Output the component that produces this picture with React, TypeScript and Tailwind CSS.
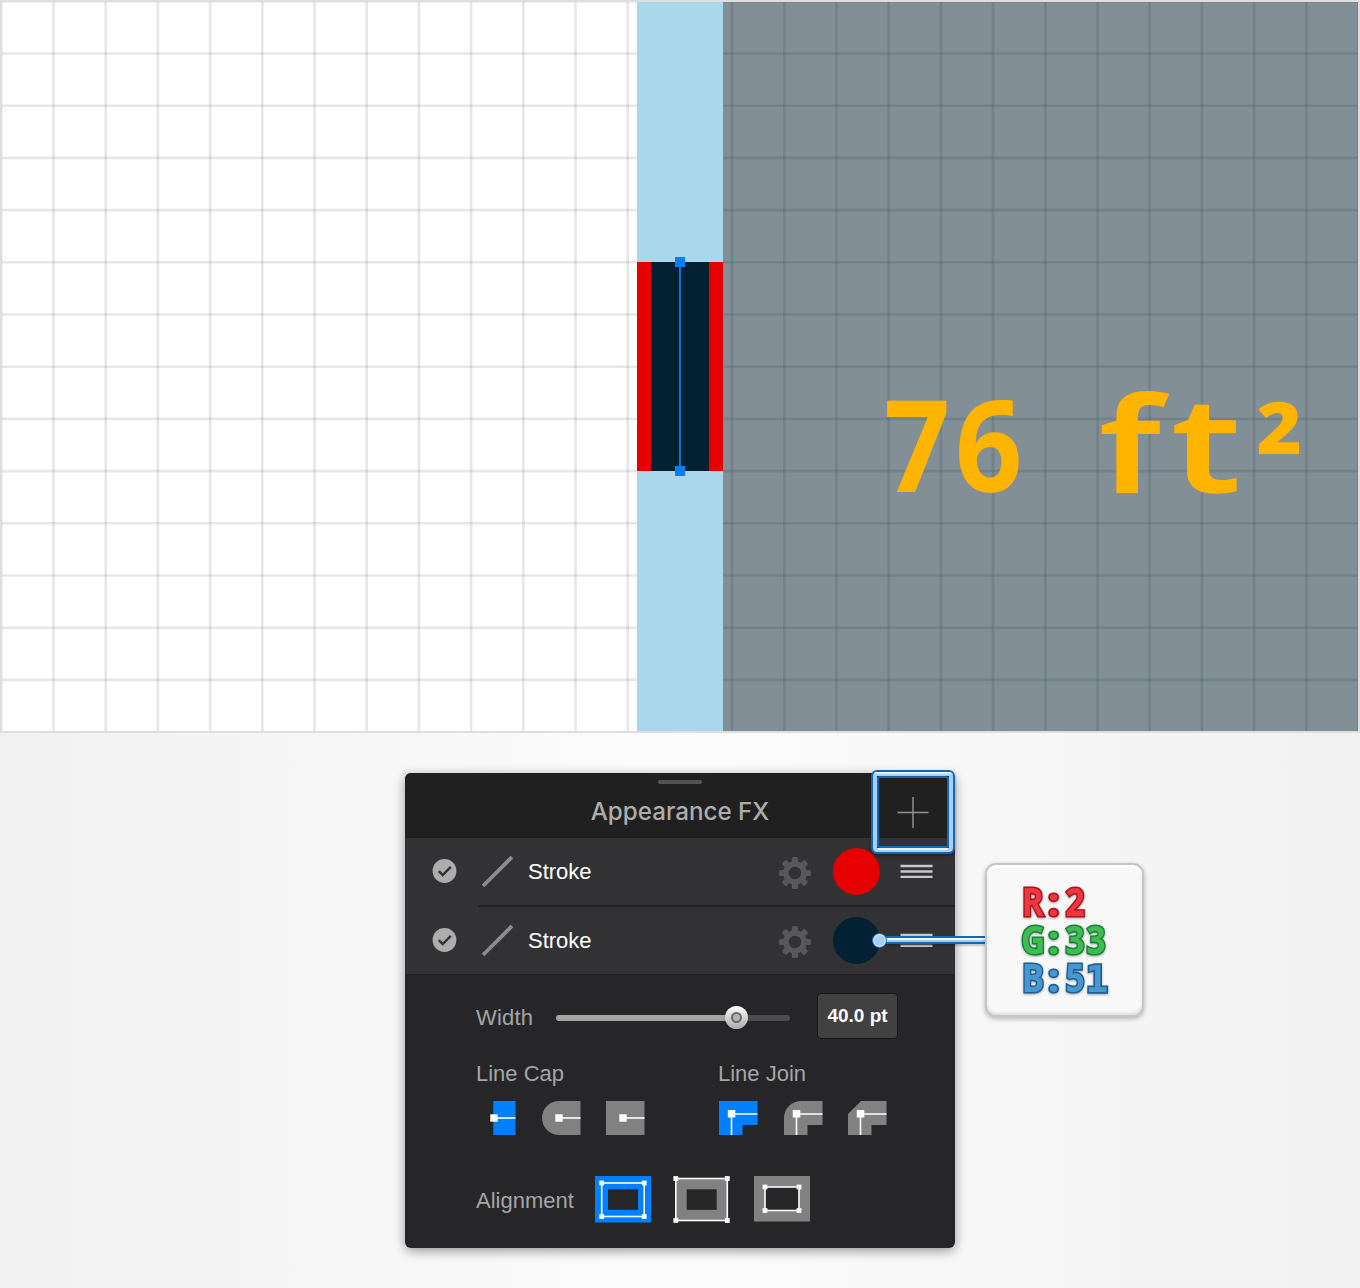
import React from "react";

const PITCH = 52.2;

function Grid({ color }: { color: string }) {
  const columns = Array.from({ length: 27 }, (_, i) => `M${1.3 + i * PITCH} 0V733`).join("");
  const rows = Array.from({ length: 14 }, (_, i) => `M0 ${1.3 + i * PITCH}H1360`).join("");
  return (
    <svg width="1360" height="733" viewBox="0 0 1360 733" fill="none" stroke={color} strokeWidth="2.6">
      <path d={columns} />
      <path d={rows} />
    </svg>
  );
}

function Canvas() {
  return (
    <section className="relative h-[733px] overflow-hidden border-2 border-[#dedede] bg-white">
      <div className="absolute -top-[2px] -left-[2px]">
        <Grid color="#80808030" />
      </div>
      <div className="absolute top-0 bottom-0 left-[721px] right-0 overflow-hidden bg-[#828f97]">
        <div className="absolute -top-[2px] -left-[723px] w-[1360px]">
          <Grid color="#5060684a" />
        </div>
      </div>
      <div className="absolute inset-y-0 left-[634.7px] w-[86.8px] bg-[#a9d8ec]" />
      <div className="absolute top-[260px] left-[634.7px] flex h-[209px] w-[86.8px] justify-center bg-[#e60000]">
        <div className="w-[58px] bg-[#022133]" />
      </div>
      <div className="absolute top-[255px] left-[673px] flex h-[219px] w-[10px] flex-col items-center justify-between">
        <span className="size-[10px] bg-[#007fff]" />
        <span className="w-[2px] grow bg-[#1470cc]" />
        <span className="size-[10px] bg-[#007fff]" />
      </div>
      <div className="absolute top-[361px] left-[881px] flex h-[160px] whitespace-pre font-['Open_Sans'] text-[127px] leading-[160px] font-bold text-[#ffb400]">
        <span className="w-[72px]"><span className="inline-block origin-left translate-x-px scale-x-[0.91]">7</span></span>
        <span className="w-[138px]"><span className="inline-block origin-left scale-x-[0.93]">6 </span></span>
        <span className="w-[76px] font-semibold"><span className="inline-block origin-[0_128px] translate-x-[7px] scale-x-[1.31] scale-y-[1.03] [-webkit-text-stroke:1.8px_#ffb400]">f</span></span>
        <span className="w-[84px] font-semibold"><span className="inline-block origin-[0_128px] translate-x-[3px] scale-x-[1.36] scale-y-[1.03] [-webkit-text-stroke:1.6px_#ffb400]">t</span></span>
        <span className="inline-block origin-[0_88px] translate-x-[2.5px] translate-y-[14px] scale-y-[0.94]">²</span>
      </div>
    </section>
  );
}

function Gear() {
  return (
    <svg width="34" height="34" viewBox="-17 -17 34 34" fill="#58585b">
      {[0, 45, 90, 135].map((a) => (
        <rect key={a} x="-3.1" y="-16" width="6.2" height="32" rx="1.6" transform={`rotate(${a})`} />
      ))}
      <circle r="11.8" />
      <circle r="6.2" fill="#323235" />
    </svg>
  );
}

function StrokeRow({ swatch, last = false }: { swatch: string; last?: boolean }) {
  return (
    <div className="relative flex h-[68.7px] items-center bg-[#323235]">
      <svg className="ml-[27px] -mt-0.5" width="26" height="26" viewBox="0 0 26 26" fill="none">
        <circle cx="12.5" cy="13" r="11.9" fill="#adadae" />
        <path d="M6.8 13.1 10.7 17 18.8 8.9" stroke="#323235" strokeWidth="2.4" />
      </svg>
      <svg className="ml-[22px] -mt-0.5" width="34" height="34" viewBox="0 0 34 34" fill="none">
        <path d="M3 32 32 3" stroke="#8c8c8d" strokeWidth="3.8" />
      </svg>
      <span className="ml-[14px] w-[250px] text-[22px] leading-7 text-white">Stroke</span>
      <span className="mt-[2px]"><Gear /></span>
      <span className={`-mt-px ml-[21px] size-[47px] rounded-full ${swatch}`} />
      <span className="-mt-0.5 ml-[20px]">
        <svg width="33" height="14" viewBox="0 0 33 14" stroke="#c8c8c9" strokeWidth="2.3">
          <path d="M0.5 2H32.5M0.5 7.5H32.5M0.5 12.8H32.5" />
        </svg>
      </span>
      <span className={`absolute right-0 bottom-0 h-[1.5px] bg-[#222224] ${last ? "left-0" : "left-[73px]"}`} />
    </div>
  );
}

const GREY = "#818181";
const BLUE = "#007fff";

function CapIcon({ kind }: { kind: "butt" | "round" | "square" }) {
  return (
    <svg width="39" height="34" viewBox="0 0 39 34">
      {kind === "butt" && <rect x="16.3" width="22.2" height="34" fill={BLUE} />}
      {kind === "round" && <path d="M38.5 0H17a17 17 0 0 0 0 34H38.5Z" fill={GREY} />}
      {kind === "square" && <rect width="38.5" height="34" fill={GREY} />}
      <path d="M17 17H38.5" stroke="#fff" strokeWidth="1.6" />
      <rect x="13.3" y="13.3" width="7.4" height="7.4" fill="#fff" />
    </svg>
  );
}

function JoinIcon({ d, fill }: { d: string; fill: string }) {
  return (
    <svg width="39" height="34" viewBox="0 0 39 34">
      <path d={`${d}H38.5V24H23.5V34H0Z`} fill={fill} />
      <path d="M38.5 13H12.5V34" fill="none" stroke="#fff" strokeWidth="1.6" />
      <rect x="8.8" y="9" width="7.5" height="7.5" fill="#fff" />
    </svg>
  );
}

function AlignIcon({ fill, outer, hole, path }: { fill: string; outer: number[]; hole: number[]; path: number[] }) {
  const [x, y, w, h] = path;
  const corners = [[x, y], [x + w, y], [x, y + h], [x + w, y + h]];
  return (
    <svg width="56" height="47" viewBox="0 0 56 47" className="overflow-visible">
      <rect x={outer[0]} y={outer[1]} width={outer[2]} height={outer[3]} fill={fill} />
      <rect x={hole[0]} y={hole[1]} width={hole[2]} height={hole[3]} fill="#262628" />
      <rect x={x} y={y} width={w} height={h} fill="none" stroke="#fff" strokeWidth="1.6" />
      {corners.map(([cx, cy]) => (
        <rect key={`${cx}-${cy}`} x={cx - 2.4} y={cy - 2.4} width="4.8" height="4.8" fill="#fff" />
      ))}
    </svg>
  );
}

function Settings() {
  return (
    <div className="h-[272px] pl-[71px] text-[22px] leading-7 text-[#a5a5a6]">
      <div className="flex h-[84px] items-center">
        <span className="mt-px w-[79.5px] tracking-[0.2px]">Width</span>
        <span className="relative mt-px flex h-[6px] w-[234.5px] overflow-visible rounded-full bg-[#4c4c4e]">
          <i className="w-[181px] rounded-full bg-[#a3a3a4]" />
          <i className="absolute -top-[9px] left-[169px] grid size-[23px] place-items-center rounded-full bg-linear-to-b from-white to-[#aaaaaa] shadow">
            <i className="size-[11px] rounded-full border-2 border-[#6a6a6a] bg-[#b5b5b5]" />
          </i>
        </span>
        <span className="-mt-[2px] ml-[27px] grid h-[46px] w-[81px] place-items-center rounded-[4px] border border-[#171718] bg-[#414141] text-[19px] font-bold text-white">40.0 pt</span>
      </div>
      <div className="flex pt-[1px]">
        <div className="w-[242px]">
          <div>Line Cap</div>
          <div className="mt-[13px] flex gap-[25.5px] pl-[1px]">
            <CapIcon kind="butt" />
            <CapIcon kind="round" />
            <CapIcon kind="square" />
          </div>
        </div>
        <div>
          <div>Line Join</div>
          <div className="mt-[13px] flex gap-[25.5px] pl-[1px]">
            <JoinIcon d="M0 0" fill={BLUE} />
            <JoinIcon d="M0 34V17A17 17 0 0 1 17 0" fill={GREY} />
            <JoinIcon d="M0 34V13L13 0" fill={GREY} />
          </div>
        </div>
      </div>
      <div className="mt-[41px] flex h-[47px] items-center">
        <span className="mt-[2px] w-[119px]">Alignment</span>
        <div className="flex gap-[23.3px]">
          <AlignIcon fill={BLUE} outer={[0, 0, 56, 46.5]} hole={[13, 13.3, 30, 20.5]} path={[6.7, 7, 42.5, 33.5]} />
          <AlignIcon fill={GREY} outer={[2, 2, 51, 42]} hole={[12.7, 13.3, 30, 20.5]} path={[1.8, 2.5, 51.5, 42]} />
          <AlignIcon fill={GREY} outer={[0, 0, 56, 45.5]} hole={[11, 11, 34, 24]} path={[11, 11, 34, 23.5]} />
        </div>
      </div>
    </div>
  );
}

function Channel({ label, tone }: { label: string; tone: string }) {
  return (
    <span className={`flex h-[38px] leading-[38px] [paint-order:stroke_fill] drop-shadow-[0_1px_1px_#0005] ${tone}`}>
      {label.split("").map((c, i) => (
        <span key={i} className="flex w-[21.3px] justify-center">
          <span className={c === "1" ? "translate-y-[2px] scale-x-105 scale-y-[1.06] font-['DejaVu_Sans_Mono'] text-[36px]" : c === ":" ? "scale-x-110" : "scale-x-[0.86]"}>{c}</span>
        </span>
      ))}
    </span>
  );
}

function ColorCallout() {
  return (
    <>
      <div className="absolute top-[163px] left-[474px] h-[8px] w-[107px] border-y-2 border-[#1268b3] bg-linear-to-b from-[#f1f7ff] from-45% to-[#9fccfa] to-55% shadow-[0_2px_2px_#0003]" />
      <div className="absolute top-[159.5px] left-[467px] size-[15px] rounded-full border-[1.6px] border-[#1268b3] bg-[#a9cdf5] shadow-[inset_0_0_0_1.2px_#d9ebff]" />
      <div className="absolute top-[90px] left-[580px] h-[154px] w-[159px] rounded-[11px] border-2 border-[#c6c6c6] bg-[#f8f8f8] pt-[16.5px] pl-[35px] font-['Open_Sans'] text-[39px] font-bold whitespace-pre shadow-[inset_0_3px_1px_#fff,inset_0_-2px_3px_#ddd,0_2px_5px_#0004]">
        <Channel label="R:2" tone="text-[#ec3841] [-webkit-text-stroke:3.2px_#b50f19]" />
        <Channel label="G:33" tone="text-[#3fbd52] [-webkit-text-stroke:3.2px_#178339]" />
        <Channel label="B:51" tone="text-[#4797d3] [-webkit-text-stroke:3.2px_#1c5f96]" />
      </div>
    </>
  );
}

function AppearancePanel() {
  return (
    <div className="relative mt-[40px] h-[475px] w-[550px] rounded-[6px] bg-[#262628] shadow-[0_3px_12px_#0006]">
      <header className="relative flex h-[65px] justify-center rounded-t-[6px] bg-[#202020] pt-[23px] font-['Inter'] text-[24.2px] leading-[32px] font-medium text-[#adadad]">
        <span className="absolute top-[6.5px] h-[4.5px] w-[44px] rounded-full bg-[#515151]" />
        Appearance FX
      </header>
      <StrokeRow swatch="bg-[#e60000]" />
      <StrokeRow swatch="bg-[#022133]" last />
      <Settings />
      <div className="absolute -top-[3px] left-[466px] h-[84px] w-[84px] rounded-[6px] border-2 border-[#1268b3] shadow-[0_2px_3px_#0005]">
        <div className="h-full rounded-[4px] border-4 border-[#a9cef9]">
          <div className="grid h-full place-items-center rounded-[3px] border-2 border-[#1268b3]">
            <svg width="32" height="32" viewBox="0 0 32 32" stroke="#959595" strokeWidth="1.4">
              <path d="M0.5 16.5H31.5M16 1V32" />
            </svg>
          </div>
        </div>
        <span className="absolute top-0 right-[2px] left-[2px] h-[2px] rounded-full bg-[#e9f3ff]" />
        <span className="absolute right-[5px] bottom-[2px] left-[5px] h-[2px] bg-[#e9f3ff]" />
      </div>
      <ColorCallout />
    </div>
  );
}

export default function App() {
  return (
    <main className="h-[1288px] w-[1360px] overflow-hidden bg-linear-to-r from-[#f1f1f1] via-[#fcfcfc] to-[#f1f1f1] font-['Liberation_Sans',sans-serif]">
      <Canvas />
      <div className="flex justify-center">
        <AppearancePanel />
      </div>
    </main>
  );
}
